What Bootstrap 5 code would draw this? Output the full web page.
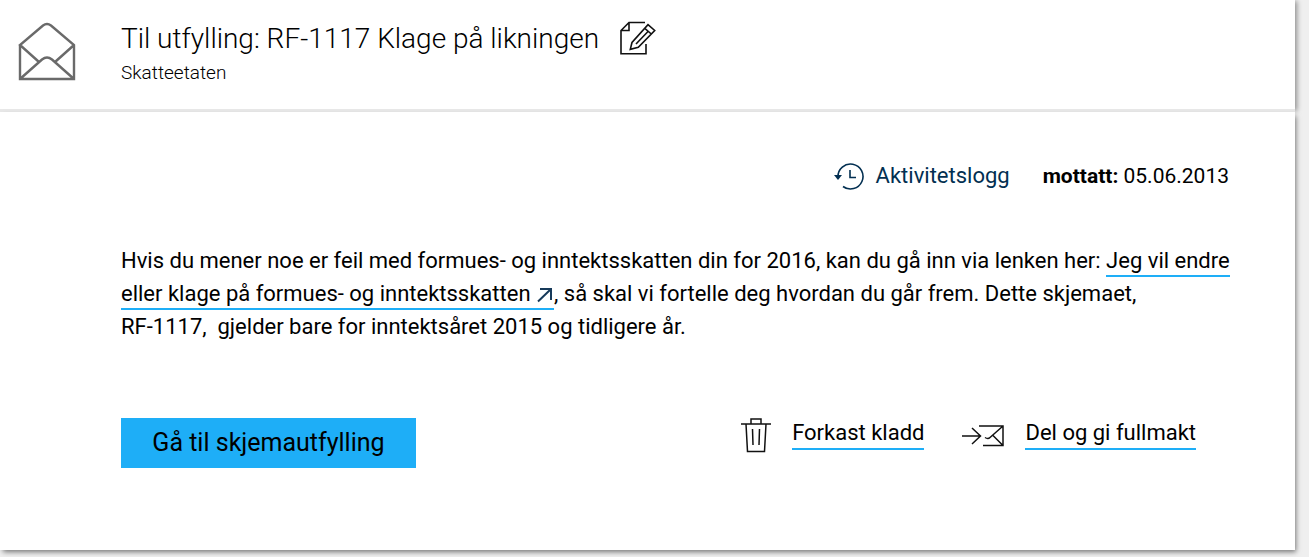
<!DOCTYPE html>
<html lang="nb">
<head>
<meta charset="utf-8">
<meta name="viewport" content="width=device-width, initial-scale=1">
<title>RF-1117 Klage på likningen</title>
<link rel="stylesheet" href="https://cdn.jsdelivr.net/npm/bootstrap@5.3.0/dist/css/bootstrap.min.css">
<style>
  body { background: #efefef; color: #000; font-family: Roboto, "Noto Sans", sans-serif; font-size: 22px; line-height: 33px; }
  .message { margin-right: 14px; padding-bottom: 7px; }
  .sheet { background: #fff; }
  .sheet-head { padding: 20px 66px 20px 18px; border-bottom: 3px solid #e8e8e8; box-shadow: 3px 0 5px -1px rgba(0, 0, 0, .4); }
  .sheet-main { padding: 48px 60px 82px 121px; box-shadow: 2px 3px 5px -1px rgba(0, 0, 0, .5); }
  .head-icon { width: 103px; padding-top: 2px; }
  .title-row { gap: 20px; }
  .title { font-size: 28px; line-height: 37px; font-weight: 300; }
  .sender { font-size: 19px; line-height: 32px; font-weight: 300; }
  .log-link { color: #022f51; }
  .log { gap: 33px; padding-right: 6px; line-height: 32px; }
  .received { font-size: 21px; }
  .ink-link { color: #000; border-bottom: 2px solid #1eaef7; padding-bottom: 2px; }
  .intro { margin-top: 52px; }
  .actions { margin-top: 75px; padding-right: 39px; }
  .go { background: #1eaef7; color: #000; width: 295px; height: 50px; font-size: 25px; line-height: 30px; }
  .go:hover { background: #37b7f8; color: #000; }
  .tools { column-gap: 38px; }
  .tool { gap: 21px; }
  .tool .ink-link { line-height: 30px; padding-bottom: 0; margin-bottom: 3px; }
  svg { fill: none; flex: none; }
</style>
</head>
<body>
<main class="message">
  <header class="sheet sheet-head d-flex">
    <div class="head-icon">
      <svg class="d-block" width="58" height="60" viewBox="0 0 58 60" stroke="#6a6a6a" stroke-width="2.400" aria-hidden="true">
        <path d="M2 23V57H56V23L33 3.500Q29 .500 25 3.500L2 23L21 40M56 23L37 40M2 57L24 37.500Q29 33.500 34 37.500L56 57"/>
      </svg>
    </div>
    <div>
      <div class="title-row d-flex">
        <h1 class="title mb-0">Til utfylling: RF-1117 Klage på likningen</h1>
        <svg width="38" height="36" viewBox="0 0 38 36" stroke="#111" stroke-width="1.600" aria-hidden="true">
          <path d="M26 2.500H10L2 10.500V33.800H27V24M10 2.500V10.500H2M29 4.700L35.700 10.500L19.300 27.300L11.300 29.300L13 22.500ZM25.500 8.200L32.300 14M29 11.500L17 24"/>
        </svg>
      </div>
      <div class="sender">Skatteetaten</div>
    </div>
  </header>

  <section class="sheet sheet-main">
    <div class="log d-flex flex-wrap justify-content-end align-items-center">
      <a href="#" class="log-link text-decoration-none d-flex align-items-center">
        <svg class="me-2" width="34" height="28" viewBox="0 0 34 28" stroke="#022f51" stroke-width="1.600" aria-hidden="true">
          <path d="M4 15A12.500 12.500 0 1 1 9 24.500M16 8V15.500H22"/><path d="M0 13H8L4 18Z" fill="#022f51" stroke="none"/>
        </svg>
        <span>Aktivitetslogg</span>
      </a>
      <div class="received"><strong>mottatt:</strong> 05.06.2013</div>
    </div>

    <p class="intro mb-0">Hvis du mener noe er feil med formues- og inntektsskatten din for 2016, kan du gå inn via lenken her: <a href="#" class="ink-link text-decoration-none">Jeg vil endre<br>eller klage på formues- og inntektsskatten <svg width="18" height="16" viewBox="0 0 18 16" stroke="#173a5a" stroke-width="2" aria-hidden="true"><path d="M2 14.500L15 2M4 2H15V13"/></svg></a>, så skal vi fortelle deg hvordan du går frem. Dette skjemaet,<br>RF-1117,&nbsp; gjelder bare for inntektsåret 2015 og tidligere år.</p>

    <div class="actions d-flex flex-wrap justify-content-between align-items-start">
      <button type="button" class="btn go rounded-0 border-0">Gå til skjemautfylling</button>
      <div class="tools d-flex flex-wrap">
        <div class="tool d-flex align-items-center">
          <svg width="30" height="35" viewBox="0 0 30 35" stroke="#111" stroke-width="1.500" aria-hidden="true">
            <path d="M0 6H30M10 6V1H20V6M5 6L6.500 33.500H23.500L25 6M11.500 11L12 27M18.500 11L18 27"/>
          </svg>
          <a href="#" class="ink-link text-decoration-none">Forkast kladd</a>
        </div>
        <div class="tool d-flex align-items-center">
          <svg width="42" height="22" viewBox="0 0 42 22" stroke="#111" stroke-width="1.500" aria-hidden="true">
            <path d="M0 11H18M10 3L18.500 11L10 19M17 1H41V20.500H21M41 1L28 12.500Q26 14.500 23 12.500M31 10.500L41 20.500"/>
          </svg>
          <a href="#" class="ink-link text-decoration-none">Del og gi fullmakt</a>
        </div>
      </div>
    </div>
  </section>
</main>
<script src="https://cdn.jsdelivr.net/npm/bootstrap@5.3.0/dist/js/bootstrap.bundle.min.js"></script>
</body>
</html>
